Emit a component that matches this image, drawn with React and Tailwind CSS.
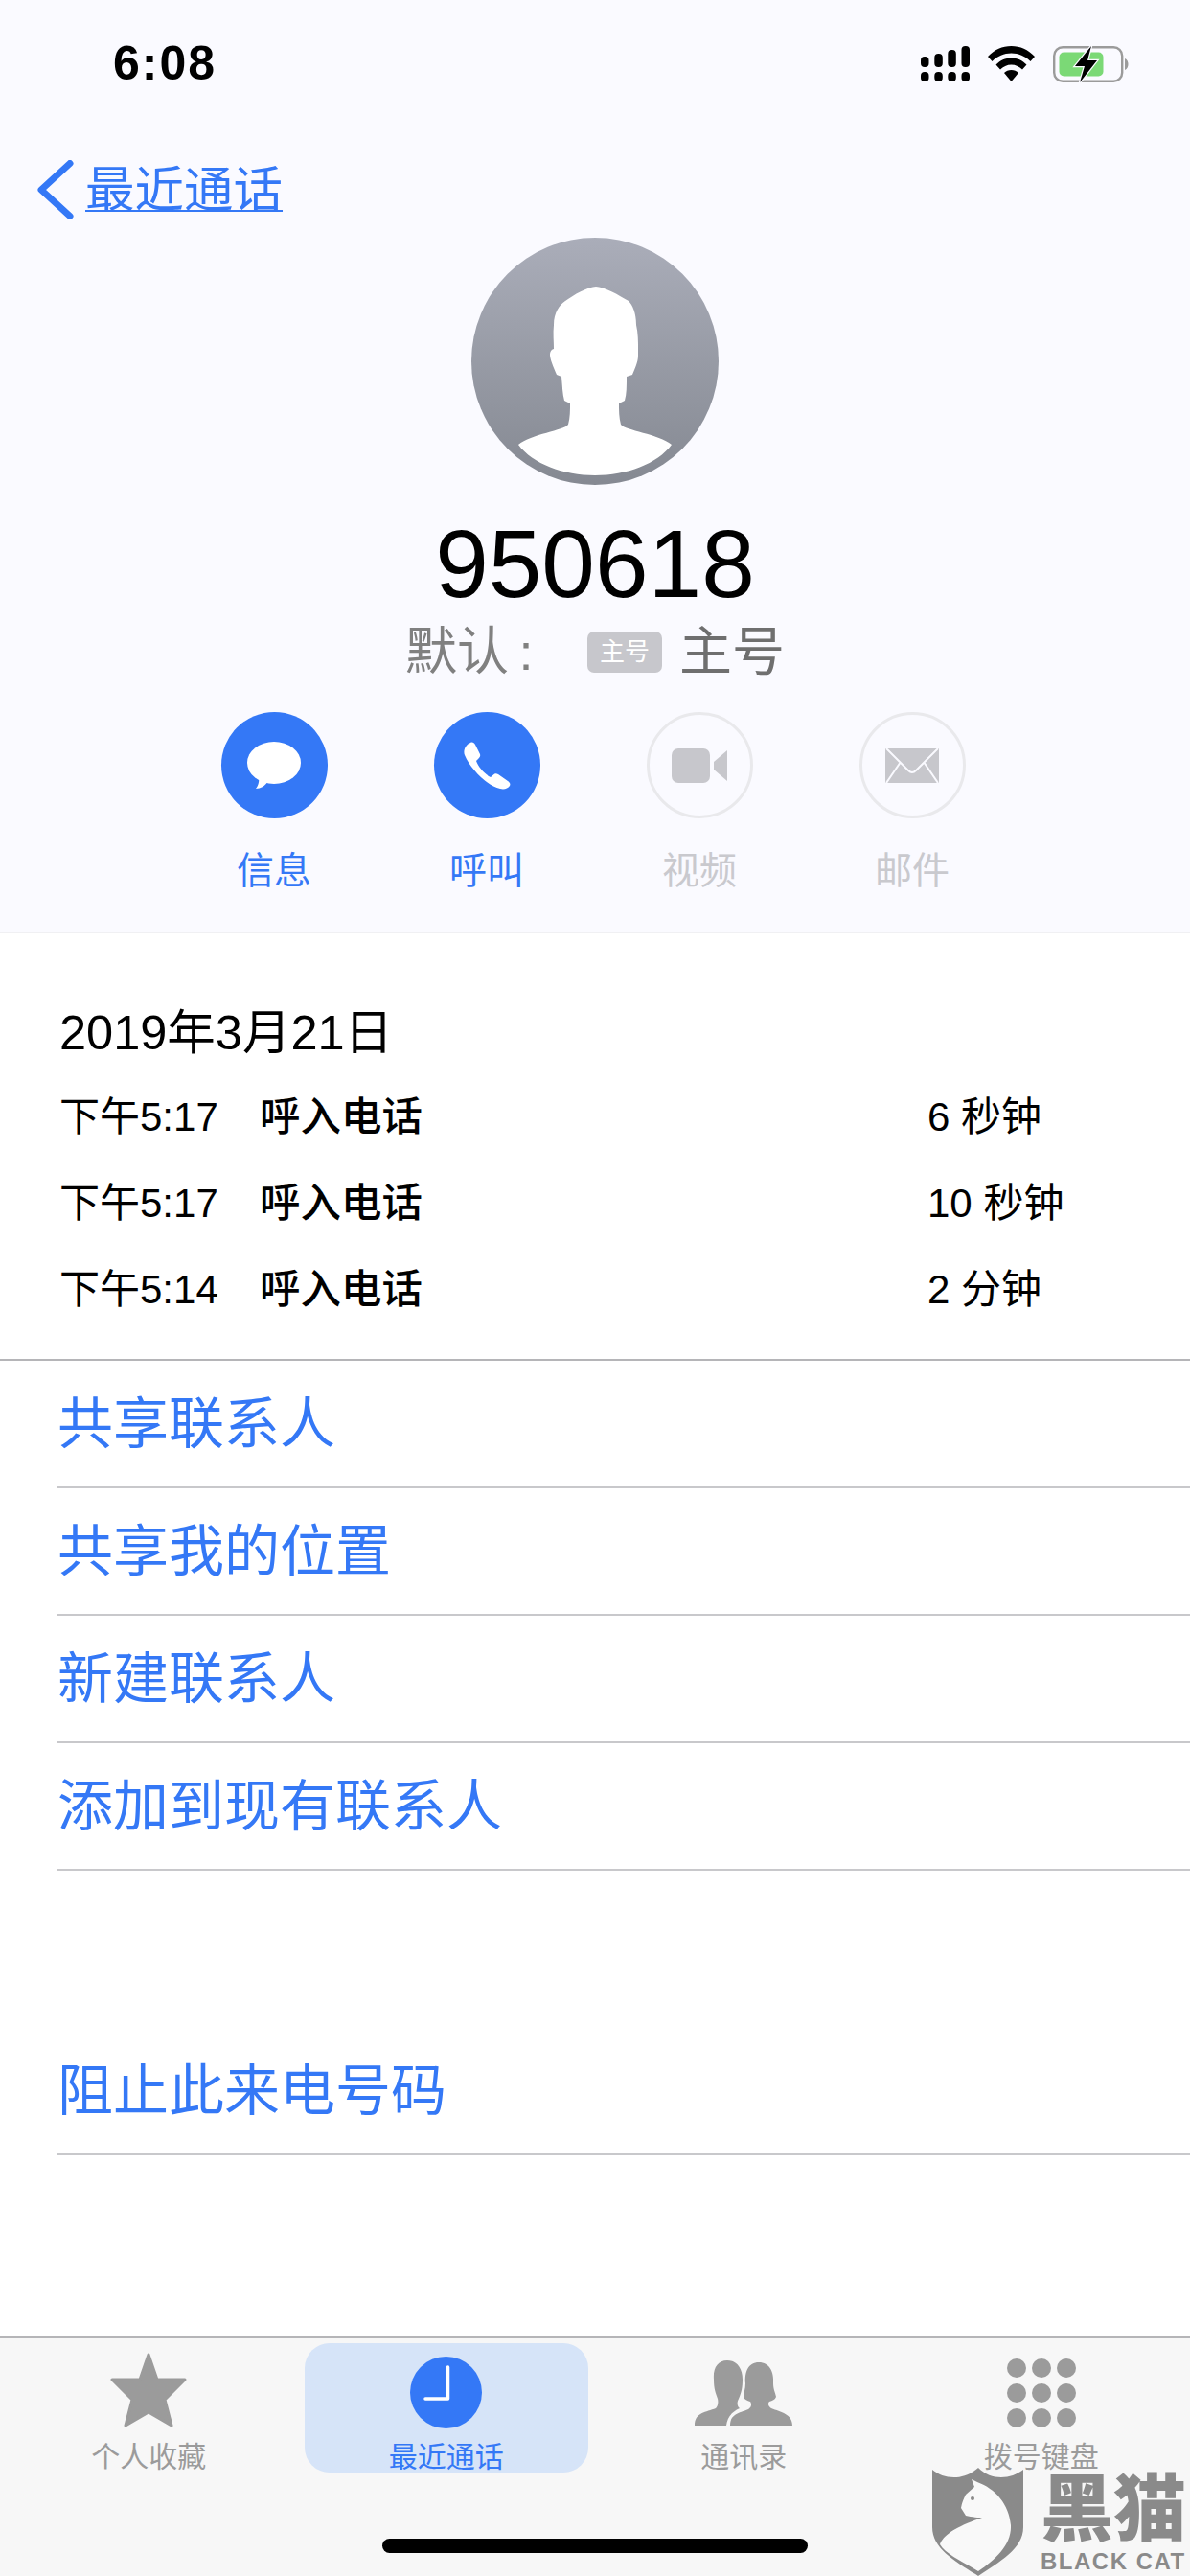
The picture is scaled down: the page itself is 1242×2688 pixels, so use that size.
import React from 'react';

const recentCalls = [
  { time: '下午5:17', type: '呼入电话', length: '6 秒钟' },
  { time: '下午5:17', type: '呼入电话', length: '10 秒钟' },
  { time: '下午5:14', type: '呼入电话', length: '2 分钟' },
];

const contactActions = ['共享联系人', '共享我的位置', '新建联系人', '添加到现有联系人'];

function StatusIcons() {
  return (
    <div className="flex items-center">
      <svg width="51" height="37" viewBox="0 0 51 37" fill="#000">
        <rect x="0" y="11" width="8.5" height="11" rx="4" />
        <rect x="14.3" y="8" width="8.5" height="14" rx="4" />
        <rect x="28.3" y="4" width="8.5" height="18" rx="4" />
        <rect x="42.5" y="0" width="8.5" height="22" rx="4" />
        <rect x="0" y="27" width="8.5" height="10" rx="4" />
        <rect x="14.3" y="27" width="8.5" height="10" rx="4" />
        <rect x="28.3" y="27" width="8.5" height="10" rx="4" />
        <rect x="42.5" y="27" width="8.5" height="10" rx="4" />
      </svg>
      <svg className="ml-[19px]" width="49" height="37" viewBox="0 0 49 37" fill="#000">
        <path d="M24.5 0C15 0 7 3.6 0 11l4.5 5C10 10.500 17 7.500 24.500 7.500S39 10.500 44.500 16L49 11C42 3.600 34 0 24.500 0Z" />
        <path d="M24.500 12.500C18 12.500 13 15 8.500 19.500L13 24.500C16 21.500 20 19.500 24.500 19.500S33 21.500 36 24.500L40.500 19.500C36 15 31 12.500 24.500 12.500Z" />
        <path d="M24.500 25C21.500 25 19 26 17 28L24.500 37 32 28C30 26 27.500 25 24.500 25Z" />
      </svg>
      <svg className="ml-[19px]" width="79" height="38" viewBox="0 0 79 38">
        <rect x="1.200" y="1.200" width="71" height="35.600" rx="9" fill="none" stroke="#9b9b9b" strokeWidth="2.400" />
        <rect x="6.500" y="6.500" width="46" height="25" rx="5" fill="#7bd976" />
        <path d="M75 13c2.500 1 3.500 3.500 3.500 6S77.500 24 75 25Z" fill="#9b9b9b" />
        <path d="M40 0 23 21h10l-5 17 18-23H36Z" fill="#000" stroke="#fafaff" strokeWidth="2.500" paintOrder="stroke" />
      </svg>
    </div>
  );
}

function AvatarIcon() {
  return (
    <div className="size-[258px] rounded-full bg-gradient-to-b from-[#aaadb9] to-[#858992] overflow-hidden">
      <svg width="258" height="258" viewBox="0 0 258 258" fill="#fff">
        <path d="M130 51C122 51 106 60 98 66C92 70 86 78 86 91C85 100 86 108 86 116C82 117 82 121 82 123C83 130 87 138 89 143L94 145C95 155 95 163 97 170L103 173C103 180 103 188 101 195C97 201 62 205 49 216C64 236 96 248 129 248C162 248 194 236 209 216C196 205 160 201 156 195C154 188 154 180 154 173L160 170C162 163 162 155 162 145L168 143C170 138 174 130 174 123C174 121 174 117 174 116C174 108 174 100 172 91C172 78 168 70 164 66C154 60 138 51 130 51Z" />
      </svg>
    </div>
  );
}

function ActionButton({ label, active, children }) {
  return (
    <div className="w-[222px] flex flex-col items-center">
      <div
        className={
          active
            ? 'size-[111px] rounded-full bg-[#3478f6] flex items-center justify-center'
            : 'size-[111px] rounded-full border-[3px] border-[#e9e9ec] flex items-center justify-center'
        }
      >
        {children}
      </div>
      <span className={active ? 'mt-[33px] text-[39px] leading-[44px] text-[#3478f6]' : 'mt-[33px] text-[39px] leading-[44px] text-[#c9c9ce]'}>
        {label}
      </span>
    </div>
  );
}

function TabItem({ label, active, children }) {
  return (
    <div
      className={
        active
          ? 'w-[297px] h-[135px] rounded-[26px] bg-[#d6e4f8] flex flex-col items-center'
          : 'w-[297px] h-[135px] flex flex-col items-center'
      }
    >
      <div className="h-[103px] flex items-center justify-center">{children}</div>
      <span className={active ? 'text-[30px] leading-[32px] text-[#3478f6]' : 'text-[30px] leading-[32px] text-[#9b9b9b]'}>
        {label}
      </span>
    </div>
  );
}

function Watermark() {
  return (
    <div className="absolute left-[973px] top-[2575px] flex">
      <svg width="95" height="113" viewBox="0 0 95 113">
        <path d="M0 2C12 12 32 14 48 0C62 14 82 12 95 2L95 62C95 85 70 98 48 113C25 98 0 85 0 62Z" fill="#8a8a8a" />
        <path d="M41 12L47 15C66 22 80 38 82 60C83 80 66 96 48 108C30 97 14 90 8 80C12 70 24 62 52 52C44 52 40 51 35 50L30 42C31 36 33 32 35 28L44 20Z" fill="#f9f9f9" />
        <circle cx="42" cy="32" r="2" fill="#8a8a8a" />
      </svg>
      <div className="ml-[18px] pt-[10px] flex flex-col">
        <span className="text-[76px] leading-[68px] font-black text-[#8a8a8a]">黑猫</span>
        <span className="mt-[10px] text-[24px] leading-[20px] font-bold text-[#8a8a8a] tracking-[1.500px] whitespace-nowrap">BLACK CAT</span>
      </div>
    </div>
  );
}

export default function App() {
  return (
    <div
      className="relative w-[1242px] h-[2688px] overflow-hidden bg-white flex flex-col"
      style={{ fontFamily: '"Liberation Sans", "Noto Sans CJK SC", sans-serif' }}
    >
      <header className="h-[974px] bg-[#fafaff] border-b border-[#f0f0f3] flex flex-col">
        <div className="flex items-center justify-between h-[37px] mt-[48px] pl-[118px] pr-[64px]">
          <span className="text-[50px] leading-[37px] font-bold tracking-[2px] text-black">6:08</span>
          <StatusIcons />
        </div>

        <div className="mt-[82px] h-[62px] pl-[39px] flex items-center">
          <svg width="38" height="62" viewBox="0 0 38 62" fill="none" stroke="#3478f6" strokeWidth="7" strokeLinecap="round" strokeLinejoin="round">
            <path d="M34 3.500 4 31l30 27.500" />
          </svg>
          <span className="ml-[12px] text-[51.500px] leading-[62px] text-[#3478f6] underline decoration-2 underline-offset-[3px]">最近通话</span>
        </div>

        <div className="mt-[19px] flex flex-col items-center">
          <AvatarIcon />
          <div className="mt-[26px] text-[100px] leading-[112px] text-black">950618</div>
          <div className="mt-[6px] h-[60px] flex items-center">
            <span className="text-[54px] leading-[60px] text-[#808080]">默认</span>
            <span className="w-[36px] text-center text-[54px] leading-[60px] text-[#808080]">:</span>
            <span className="ml-[46px] w-[78px] h-[43px] rounded-[7px] bg-[#c7c7cc] text-white text-[26px] leading-[43px] text-center">主号</span>
            <span className="ml-[18px] text-[55px] leading-[60px] text-[#6f6f6f]">主号</span>
          </div>

          <div className="mt-[33px] pr-[4px] flex justify-center">
            <ActionButton label="信息" active>
              <svg width="56" height="50" viewBox="0 0 56 50" fill="#fff">
                <ellipse cx="28" cy="22" rx="28" ry="22" />
                <path d="M12 36c1 5-.5 10-3 13 5 0 10-3 13-8Z" />
              </svg>
            </ActionButton>
            <ActionButton label="呼叫" active>
              <svg width="50" height="50" viewBox="0 0 50 50" fill="#fff">
                <path d="M8 1C10 0 12 1 13 3L18 13C18.500 15 18 16 16 18L14 20C16 26 23 34 29 37L32 34.500C33.500 33 35 33 37 34L47 41C49 42.500 50 44 49 46C47 49 43 50 39 49C25 46 8 28 2 14C0 9 3 3 8 1Z" />
              </svg>
            </ActionButton>
            <ActionButton label="视频">
              <svg width="58" height="36" viewBox="0 0 58 36" fill="#c7c7cc">
                <rect x="0" y="0" width="40" height="36" rx="7" />
                <path d="M44 14 58 2v32L44 22Z" />
              </svg>
            </ActionButton>
            <ActionButton label="邮件">
              <svg width="56" height="36" viewBox="0 0 56 36">
                <rect width="56" height="36" fill="#c7c7cc" />
                <path d="M1 0 24 23c2.500 2.500 5.500 2.500 8 0L55 0M1 36l15-22M55 36 40 14" fill="none" stroke="#fafaff" strokeWidth="2" />
              </svg>
            </ActionButton>
          </div>
        </div>
      </header>

      <section className="h-[446px] pt-[78px] border-b-2 border-[#b5b5b8]">
        <div className="pl-[62px] text-[50.500px] leading-[52px] text-black">2019年3月21日</div>
        <div className="mt-[38px] flex flex-col gap-[42px]">
          {recentCalls.map((call, i) => (
            <div key={i} className="flex pl-[62px] text-[42px] leading-[48px] text-black">
              <span className="w-[209px]">{call.time}</span>
              <span className="w-[697px] font-medium text-[42.500px]">{call.type}</span>
              <span>{call.length}</span>
            </div>
          ))}
        </div>
      </section>

      <ul className="pl-[60px]">
        {contactActions.map((label) => (
          <li key={label} className="h-[133px] border-b-2 border-[#c8c8cb] flex items-center text-[58px] text-[#3478f6]">
            {label}
          </li>
        ))}
      </ul>

      <div className="mt-[163px] pl-[60px]">
        <div className="h-[134px] border-b-2 border-[#c8c8cb] flex items-center text-[58px] text-[#3478f6]">阻止此来电号码</div>
      </div>

      <footer className="mt-auto h-[250px] bg-[#f7f7f7] border-t-2 border-[#b5b5b8] flex flex-col">
        <div className="mt-[5px] flex gap-[14px] px-[7px]">
          <TabItem label="个人收藏">
            <svg className="mb-[6px]" width="82" height="78" viewBox="0 0 82 78" fill="#9b9b9b" stroke="#9b9b9b" strokeWidth="3" strokeLinejoin="round">
              <path d="M41 2 50 28H79L58 49 65 76 41 62 17 76 24 49 3 28H32Z" />
            </svg>
          </TabItem>
          <TabItem label="最近通话" active>
            <svg width="75" height="75" viewBox="0 0 75 75">
              <circle cx="37.500" cy="37.500" r="37.500" fill="#3478f6" />
              <path d="M39.500 11V44H16" fill="none" stroke="#fff" strokeWidth="3.500" strokeLinecap="round" strokeLinejoin="round" />
            </svg>
          </TabItem>
          <TabItem label="通讯录">
            <svg width="102" height="68" viewBox="0 0 102 68" fill="#9b9b9b">
              <path d="M34 0C24 0 19 8 20 20C20 30 22 34 24 40C25 44 24 48 22 50C12 54 0 54 0 68H33C34 60 38 54 47 50C44 47 44 44 46 40C49 33 50 28 50 20C50 8 44 0 34 0Z" />
              <path d="M67 2C56 2 52 12 53 24C53 30 51 34 51 38C52 41 55 42 58 43C60 46 59 49 56 51C46 55 37 56 37 68H102C102 56 90 54 80 50C77 48 76 45 78 43C81 42 84 41 85 38C84 33 82 30 82 24C83 12 78 2 67 2Z" />
            </svg>
          </TabItem>
          <TabItem label="拨号键盘">
            <svg width="72" height="72" viewBox="0 0 72 72" fill="#9b9b9b">
              {[10, 36, 62].flatMap((cy) =>
                [10, 36, 62].map((cx) => <circle key={`${cx}-${cy}`} cx={cx} cy={cy} r="10" />)
              )}
            </svg>
          </TabItem>
        </div>
        <div className="mt-[69px] mx-auto w-[444px] h-[15px] rounded-full bg-black"></div>
      </footer>

      <Watermark />
    </div>
  );
}
